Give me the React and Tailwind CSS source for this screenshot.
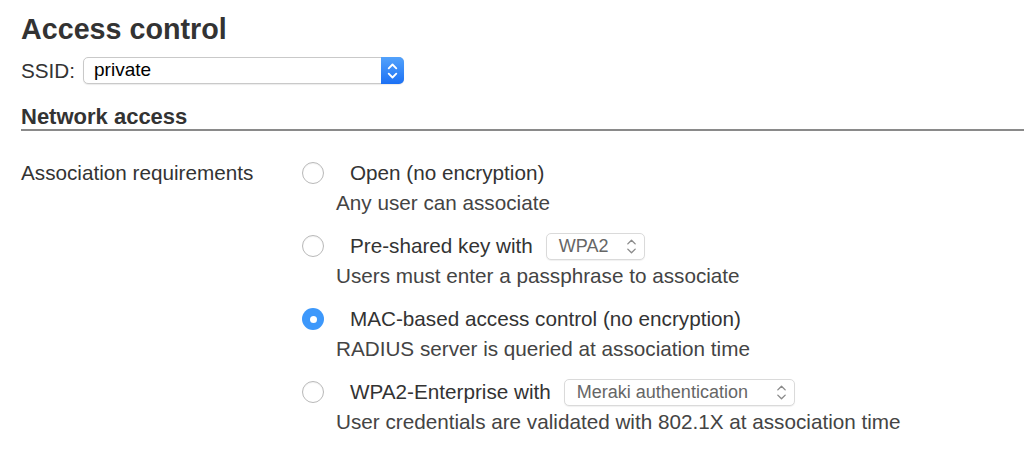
import React from 'react';

const Chevrons = ({ color = '#fff', className = '', width = 1.6 }) => (
  <svg viewBox="0 0 12 18" className={className} fill="none" stroke={color} strokeWidth={width} strokeLinecap="round" strokeLinejoin="round">
    <path d="M2.5 6.5 L6 3 L9.5 6.5" />
    <path d="M2.5 11.5 L6 15 L9.5 11.5" />
  </svg>
);

const Radio = ({ checked }) =>
  checked ? (
    <span className="flex h-[22px] w-[22px] shrink-0 items-center justify-center rounded-full bg-[#3d98fb]">
      <span className="h-[7px] w-[7px] rounded-full bg-white" />
    </span>
  ) : (
    <span className="h-[22px] w-[22px] shrink-0 rounded-full border border-[#b9b9b9] bg-white shadow-[inset_0_1px_1px_rgba(0,0,0,0.05)]" />
  );

const SmallSelect = ({ value, width }) => (
  <div
    className="ml-[13px] flex h-[27px] items-center justify-between rounded-[5px] border border-[#dadada] bg-white pl-[12px] pr-[6px] shadow-[0_1px_1px_rgba(0,0,0,0.06)]"
    style={{ width }}
  >
    <span className="text-[18px] leading-none text-[#666]">{value}</span>
    <Chevrons color="#8a8a8a" width={1.3} className="h-[19px] w-[13px]" />
  </div>
);

const options = [
  { title: 'Open (no encryption)', desc: 'Any user can associate' },
  { title: 'Pre-shared key with', desc: 'Users must enter a passphrase to associate', select: 'WPA2', width: 99 },
  { title: 'MAC-based access control (no encryption)', desc: 'RADIUS server is queried at association time', checked: true },
  { title: 'WPA2-Enterprise with', desc: 'User credentials are validated with 802.1X at association time', select: 'Meraki authentication', width: 231 },
];

export default function App() {
  return (
    <div className="min-h-screen bg-white pl-[21px] font-['Liberation_Sans',Arial,sans-serif] text-[#333]">
      <h1 className="pt-[12px] text-[28.7px] font-bold leading-[34px]">Access control</h1>

      {/* SSID picker */}
      <div className="mt-[11px] flex h-[27px] items-center">
        <span className="text-[20.7px]">SSID:</span>
        <div className="ml-[8px] flex h-[27px] w-[321px] items-stretch rounded-[5px] border border-[#c9c9c9] bg-white shadow-[0_1px_1px_rgba(0,0,0,0.08)]">
          <span className="flex flex-1 items-center pl-[10px] text-[19px] text-black">private</span>
          <span className="-my-px -mr-px flex w-[23px] items-center justify-center rounded-r-[5px] bg-gradient-to-b from-[#53a2fb] to-[#1b70f4]">
            <Chevrons width={1.7} className="h-[20px] w-[13px]" />
          </span>
        </div>
      </div>

      {/* Section header */}
      <div className="mt-[20px] border-b-2 border-[#8a8a8a] text-[22px] font-bold leading-[25px]">Network access</div>

      <div className="mt-[28px] flex text-[20.7px]">
        <div className="flex h-[28px] w-[281px] shrink-0 items-center">Association requirements</div>
        <div className="flex flex-col gap-[15px]">
          {options.map((o) => (
            <div key={o.title} className="flex flex-col">
              <div className="flex h-[28px] items-center">
                <Radio checked={o.checked} />
                <span className="ml-[26px] whitespace-nowrap">{o.title}</span>
                {o.select && <SmallSelect value={o.select} width={o.width} />}
              </div>
              <div className="mt-[2px] pl-[34px] leading-[28px] text-[#444]">{o.desc}</div>
            </div>
          ))}
        </div>
      </div>
    </div>
  );
}
